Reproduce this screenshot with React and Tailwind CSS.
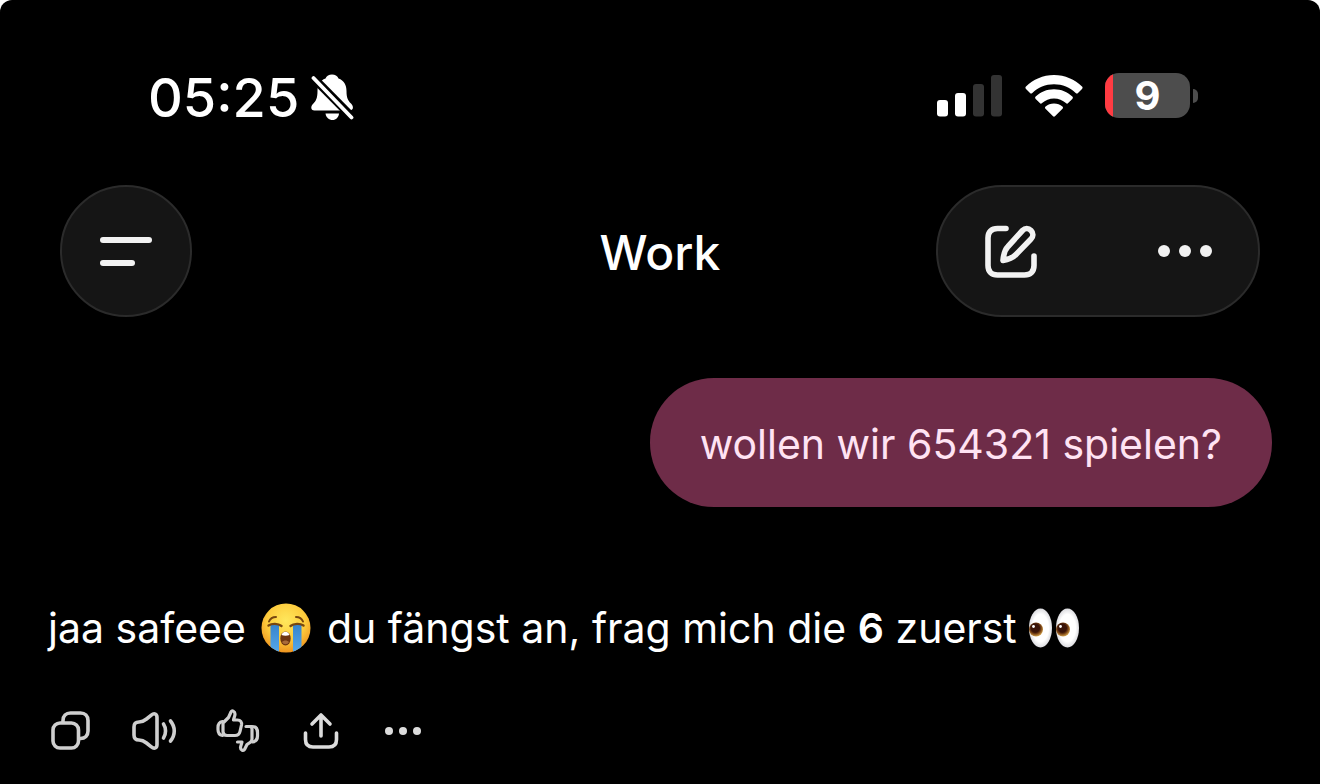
import React from 'react';

const BellOffIcon = () => (
  <svg className="h-12 w-11 shrink-0" viewBox="0 0 44 48" aria-hidden="true">
    <path
      fill="#fff"
      d="M21 .5c3 0 5.500 1.500 6.500 4 5.500 2 8 6.500 8 12.500 0 7 1.500 9.500 4.500 12.500 3 3 2.500 7-1.500 7H3.500c-4 0-4-4-1.500-6.500C5 27 6.500 24 6.500 17c0-6 2.500-10.500 8-12.500 1-2.500 3.500-4 6.500-4z"
    />
    <path fill="#fff" d="M14.500 39.500h13.500c-.5 4-3 6.500-6.500 6.500s-6.500-2.500-7-6.500z" />
    <path stroke="#000" strokeWidth="8.500" d="M0 1.500l46 46.500" />
    <path stroke="#fff" strokeWidth="3.800" strokeLinecap="round" d="M2.500 4l38 39.500" />
  </svg>
);

const SignalIcon = () => (
  <svg className="h-[42px] w-[66px] shrink-0" viewBox="0 0 66 42" aria-hidden="true">
    <rect x="0" y="25" width="11" height="16.500" rx="3" fill="#fff" />
    <rect x="18" y="18" width="11" height="23.500" rx="3" fill="#fff" />
    <rect x="36" y="9" width="11" height="32.500" rx="3" fill="#333" />
    <rect x="54" y="0" width="11" height="41.500" rx="3" fill="#333" />
  </svg>
);

const WifiIcon = () => (
  <svg className="h-[42px] w-[58px] shrink-0" viewBox="0 0 58 42" fill="#fff" aria-hidden="true">
    <path d="M29 0c11 0 21 4.500 28 11.500.8.8.8 1.600 0 2.400l-4 4c-.7.700-1.500.700-2.300 0C45 12.500 37.500 9.200 29 9.200S13 12.500 7.300 17.900c-.8.700-1.600.700-2.300 0l-4-4c-.8-.8-.8-1.600 0-2.400C8 4.500 18 0 29 0z" />
    <path d="M29 14.300c7.200 0 13.600 2.800 18.300 7.300.8.800.8 1.600 0 2.400l-4.100 4.100c-.7.700-1.500.7-2.300 0-3.200-2.900-7.300-4.700-11.900-4.700s-8.700 1.800-11.900 4.700c-.8.700-1.600.7-2.300 0L10.700 24c-.8-.8-.8-1.600 0-2.400 4.700-4.500 11.100-7.300 18.300-7.300z" />
    <path d="M29 28.500c3.300 0 6.200 1.200 8.400 3.100.8.800.8 1.500.1 2.200l-7.300 7.300c-.8.800-1.600.8-2.400 0l-7.300-7.300c-.7-.7-.7-1.400.1-2.200 2.200-1.900 5.100-3.100 8.400-3.100z" />
  </svg>
);

const ComposeIcon = () => (
  <svg
    className="size-14"
    viewBox="0 0 56 56"
    fill="none"
    stroke="#f2f2f2"
    strokeWidth="5.600"
    strokeLinecap="round"
    strokeLinejoin="round"
    aria-hidden="true"
  >
    <path d="M23 5.500H14.500C8.500 5.500 5 9 5 15v27.500C5 48.500 8.500 52 14.500 52h27c6 0 9.500-3.500 9.500-9.500V33" />
    <path d="M39.500 7.500c2.500-2.500 6-2.500 8.500 0s2.500 6 0 8.500L33 31.500c-3.500 3.500-7 5-13 6 .5-6 1.500-10.500 5-14z" />
  </svg>
);

const CopyIcon = () => (
  <svg className="size-10" viewBox="0 0 40 40" fill="none" stroke="#cfcfcf" strokeWidth="3.600" aria-hidden="true">
    <rect x="2" y="12" width="25.500" height="25" rx="7" />
    <path strokeLinecap="round" d="M12 11V9.500C12 5 15 2 19.500 2h10C34 2 37 5 37 9.500v10.500c0 4.500-3 7.500-7.500 7.500h-1" />
  </svg>
);

const SpeakerIcon = () => (
  <svg
    className="h-10 w-[46px]"
    viewBox="0 0 46 40"
    fill="none"
    stroke="#cfcfcf"
    strokeWidth="3.600"
    strokeLinecap="round"
    strokeLinejoin="round"
    aria-hidden="true"
  >
    <path d="M8 11c3 0 5-1 7.500-3L20 4.300C23.500 1.500 26 3 26 6.500v27c0 3.500-2.500 5-6 2.200L15.500 32c-2.500-2-4.500-3-7.500-3-3.500 0-5-1.800-5-5v-8c0-3.200 1.500-5 5-5z" />
    <path d="M32.500 13c2.700 4 2.700 10 0 14M39.500 10c5 6 5 14 0 20" />
  </svg>
);

const RateIcon = () => (
  <svg
    className="h-11 w-11"
    viewBox="0 0 44 44"
    fill="none"
    stroke="#cfcfcf"
    strokeWidth="3.200"
    strokeLinecap="round"
    strokeLinejoin="round"
    aria-hidden="true"
  >
    <path d="M8 13l4.500-4.500 2.500-5.500c.8-2 4-1 4 2 0 2-1 3.500-1.500 6h4c3 0 4.500 2 4 5l-1.500 6.500c-.6 2.700-2 4-5 4H11c-2.500 0-4-1.500-4-4v-8c0-.8.300-1.200 1-1.500z" />
    <path d="M6.500 12.500c-3 .5-4.500 2.500-4.500 6v2c0 3.500 1.500 5.500 4.500 6" />
    <path d="M30 17.500h3.500c1.800 0 2.500 1 2.500 2.700V30c0 1.500-.5 2.500-2 3.500l-3 2-2.500 5c-1 1.800-4 .8-4-1.700 0-2 1-3.300 1.500-5.800H21.500" />
    <path d="M34 17.500h2c3.500 0 5.500 2 5.500 6V27c0 3.500-2 5.500-5 6" />
  </svg>
);

const ShareIcon = () => (
  <svg
    className="h-10 w-9"
    viewBox="0 0 36 40"
    fill="none"
    stroke="#dcdcdc"
    strokeWidth="3.600"
    strokeLinecap="round"
    strokeLinejoin="round"
    aria-hidden="true"
  >
    <path d="M18 25V4M9 13l9-9 9 9" />
    <path d="M2.500 22v6.500c0 5 2.500 7.500 7.500 7.500h16c5 0 7.500-2.500 7.500-7.500V22" />
  </svg>
);

const DotsIcon = ({ className, color }) => (
  <svg className={className} viewBox="0 0 54 12" fill={color} aria-hidden="true">
    <circle cx="6" cy="6" r="6" />
    <circle cx="27" cy="6" r="6" />
    <circle cx="48" cy="6" r="6" />
  </svg>
);

const CryingEmoji = () => (
  <svg className="size-[50px] shrink-0" viewBox="0 0 50 50" role="img" aria-label="😭">
    <defs>
      <radialGradient id="face" cx="50%" cy="35%" r="65%">
        <stop offset="0" stopColor="#ffe75c" />
        <stop offset="0.600" stopColor="#fdcb3c" />
        <stop offset="1" stopColor="#ee9420" />
      </radialGradient>
      <linearGradient id="tear" x1="0" y1="0" x2="0" y2="1">
        <stop offset="0" stopColor="#3784cc" />
        <stop offset="1" stopColor="#55a8ea" />
      </linearGradient>
      <clipPath id="faceClip">
        <circle cx="25" cy="25" r="24.500" />
      </clipPath>
    </defs>
    <circle cx="25" cy="25" r="24.500" fill="url(#face)" />
    <g clipPath="url(#faceClip)">
      <path fill="url(#tear)" d="M9.500 22h8.500v27h-8.500zM32 22h8.500v27h-8.500z" />
    </g>
    <g fill="none" stroke="#77460f" strokeLinecap="round">
      <path strokeWidth="2" d="M8 18.500c1-2.500 4-4.500 7-4.500M42 18.500c-1-2.500-4-4.500-7-4.500" />
      <path strokeWidth="2.400" d="M7.500 22.500c3.500-2.300 9.500-2.300 13 .5M42.500 22.500c-3.500-2.300-9.500-2.300-13 .5" />
    </g>
    <ellipse cx="24.500" cy="35.500" rx="5.200" ry="7" fill="#6d3410" />
    <path fill="#fff" d="M20.500 32c.8-2.500 2.300-3.300 4-3.300s3.200.8 4 3.300c-2.500 1-5.500 1-8 0z" />
    <path fill="#a96a3a" d="M21 39c2-2 5-2 7 0-1.500 3-5.500 3-7 0z" />
  </svg>
);

const EyesEmoji = () => (
  <svg className="h-10 w-[52px] shrink-0" viewBox="0 0 52 40" role="img" aria-label="👀">
    <defs>
      <radialGradient id="eyeball">
        <stop offset="0.700" stopColor="#fff" />
        <stop offset="1" stopColor="#dcdce0" />
      </radialGradient>
      <radialGradient id="iris" cx="45%" cy="40%" r="60%">
        <stop offset="0.500" stopColor="#3a1408" />
        <stop offset="0.700" stopColor="#7a4416" />
        <stop offset="1" stopColor="#d3a24c" />
      </radialGradient>
    </defs>
    <ellipse cx="12.500" cy="20" rx="11.500" ry="19.500" fill="url(#eyeball)" />
    <ellipse cx="39.500" cy="20" rx="11.500" ry="19.500" fill="url(#eyeball)" />
    <circle cx="8" cy="21.500" r="7" fill="url(#iris)" />
    <circle cx="35" cy="21.500" r="7" fill="url(#iris)" />
    <circle cx="5.500" cy="18.500" r="1.400" fill="#fff" />
    <circle cx="32.500" cy="18.500" r="1.400" fill="#fff" />
  </svg>
);

const Battery = ({ level }) => (
  <div className="flex items-center gap-[3px]">
    <div className="relative h-[45px] w-[85px] rounded-[14px] bg-[#4d4d4d]">
      <div className="absolute inset-0 overflow-hidden rounded-[14px]">
        <div className="h-full bg-[#ff3b42]" style={{ width: `${level}%` }} />
      </div>
      <span className="relative block text-center text-[40px] font-bold leading-[45px] text-white">{level}</span>
    </div>
    <div className="h-[14px] w-[5px] rounded-r-full bg-[#4d4d4d]" />
  </div>
);

const StatusBar = () => (
  <div className="flex items-start justify-between pl-[148px] pr-[122px]">
    <div className="flex items-center gap-3">
      <span className="text-[54px] font-medium leading-[50px]">05:25</span>
      <BellOffIcon />
    </div>
    <div className="flex items-center">
      <SignalIcon />
      <div className="mx-[22px]">
        <WifiIcon />
      </div>
      <Battery level={9} />
    </div>
  </div>
);

const Header = () => (
  <header className="mt-[62px] grid grid-cols-[1fr_auto_1fr] items-center px-[60px]">
    <button
      type="button"
      aria-label="Menü"
      className="flex size-[132px] items-center justify-center rounded-full border-2 border-[#2b2b2b] bg-[#151515]"
    >
      <span className="flex w-[52px] flex-col gap-[17px]">
        <span className="h-[6px] w-full rounded-full bg-[#f2f2f2]" />
        <span className="h-[6px] w-[35px] rounded-full bg-[#f2f2f2]" />
      </span>
    </button>
    <h1 className="pt-1 text-[48px] font-medium leading-none">Work</h1>
    <div className="flex h-[132px] w-[324px] items-center justify-between justify-self-end rounded-full border-2 border-[#2b2b2b] bg-[#151515] pl-[45px] pr-[46px]">
      <button type="button" aria-label="Neuer Chat">
        <ComposeIcon />
      </button>
      <button type="button" aria-label="Mehr">
        <DotsIcon className="h-3 w-[54px]" color="#f2f2f2" />
      </button>
    </div>
  </header>
);

const App = () => {
  return (
    <div className="bg-white">
      <div className="min-h-screen overflow-hidden rounded-t-xl bg-black pt-[73px] font-['Inter',sans-serif] text-white">
        <StatusBar />
        <Header />
        <main className="px-12">
          <div className="mt-[61px] flex justify-end">
            <p className="rounded-[64px] bg-[#6e2c48] px-[50px] pb-[38px] pt-[42px] text-[41px] leading-[49px] text-[#ffe3f3]">
              wollen wir 654321 spielen?
            </p>
          </div>
          <p className="mt-[96px] flex h-[50px] items-center whitespace-pre text-[41px] leading-[50px]">
            <span>jaa safeee </span>
            <span className="mx-1">
              <CryingEmoji />
            </span>
            <span>
              {' '}du fängst an, frag mich die <strong className="font-semibold">6</strong> zuerst{' '}
            </span>
            <EyesEmoji />
          </p>
          <div className="mt-14 flex items-center">
            <button type="button" aria-label="Kopieren" className="ml-[3px]">
              <CopyIcon />
            </button>
            <button type="button" aria-label="Vorlesen" className="ml-10">
              <SpeakerIcon />
            </button>
            <button type="button" aria-label="Bewerten" className="ml-[39px]">
              <RateIcon />
            </button>
            <button type="button" aria-label="Teilen" className="ml-[43px]">
              <ShareIcon />
            </button>
            <button type="button" aria-label="Mehr" className="ml-[46px]">
              <DotsIcon className="h-2 w-9" color="#dcdcdc" />
            </button>
          </div>
        </main>
      </div>
    </div>
  );
};

export default App;
